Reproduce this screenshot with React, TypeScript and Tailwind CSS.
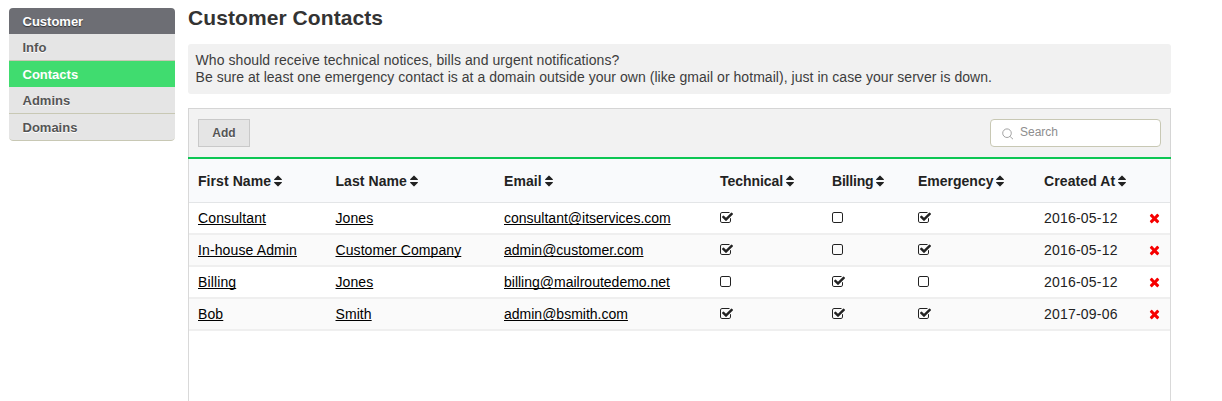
import React from "react";

const GLYPHS = {
  checked:
    "M1408 606v-318q0 -119 -84.5 -203.5t-203.5 -84.5h-832q-119 0 -203.5 84.5t-84.5 203.5v832q0 119 84.5 203.5t203.5 84.5h832q63 0 117 -25q15 -7 18 -23q3 -17 -9 -29l-49 -49q-10 -10 -23 -10q-3 0 -9 2q-23 6 -45 6h-832q-66 0 -113 -47t-47 -113v-832q0 -66 47 -113t113 -47h832q66 0 113 47t47 113v254q0 13 9 22l64 64q10 10 23 10q6 0 12 -3q20 -8 20 -29zM1639 1095l-814 -814q-24 -24 -57 -24t-57 24l-430 430q-24 24 -24 57t24 57l110 110q24 24 57 24t57 -24l263 -263l647 647q24 24 57 24t57 -24l110 -110q24 -24 24 -57t-24 -57z",
  empty:
    "M1120 1280h-832q-66 0 -113 -47t-47 -113v-832q0 -66 47 -113t113 -47h832q66 0 113 47t47 113v832q0 66 -47 113t-113 47zM1408 1120v-832q0 -119 -84.5 -203.5t-203.5 -84.5h-832q-119 0 -203.5 84.5t-84.5 203.5v832q0 119 84.5 203.5t203.5 84.5h832q119 0 203.5 -84.5t84.5 -203.5z",
  times:
    "M1298 214q0 -40 -28 -68l-136 -136q-28 -28 -68 -28t-68 28l-294 294l-294 -294q-28 -28 -68 -28t-68 28l-136 136q-28 28 -28 68t28 68l294 294l-294 294q-28 28 -28 68t28 68l136 136q28 28 68 28t68 -28l294 -294l294 294q28 28 68 28t68 -28l136 -136q28 -28 28 -68t-28 -68l-294 -294l294 -294q28 -28 28 -68z",
  sort:
    "M1024 448q0 -26 -19 -45l-448 -448q-19 -19 -45 -19t-45 19l-448 448q-19 19 -19 45t19 45t45 19h896q26 0 45 -19t19 -45zM1024 832q0 -26 -19 -45t-45 -19h-896q-26 0 -45 19t-19 45t19 45l448 448q19 19 45 19t45 -19l448 -448q19 -19 19 -45z",
};

function Glyph({ name, className }: { name: keyof typeof GLYPHS; className: string }) {
  return (
    <svg viewBox="0 0 1792 1792" className={`h-3.5 w-3.5 shrink-0 ${className}`} fill="currentColor" aria-hidden="true">
      <path transform="translate(0 1536) scale(1 -1)" d={GLYPHS[name]} />
    </svg>
  );
}

const GRID = "grid grid-cols-[137.5px_168.5px_216px_112px_86px_126px_105px_31px]";

const COLUMNS = [
  { label: "First Name", style: "tracking-[0.07px]" },
  { label: "Last Name", style: "tracking-[0.07px]" },
  { label: "Email", style: "tracking-[0.05px]" },
  { label: "Technical", style: "tracking-[-0.05px]" },
  { label: "Billing", style: "tracking-[-0.2px]" },
  { label: "Emergency", style: "tracking-[0px]" },
  { label: "Created At", style: "tracking-[0.1px]" },
];

const CONTACTS = [
  { first: "Consultant", last: "Jones", email: "consultant@itservices.com", flags: [true, false, true], created: "2016-05-12" },
  { first: "In-house Admin", last: "Customer Company", email: "admin@customer.com", flags: [true, false, true], created: "2016-05-12" },
  { first: "Billing", last: "Jones", email: "billing@mailroutedemo.net", flags: [false, true, false], created: "2016-05-12" },
  { first: "Bob", last: "Smith", email: "admin@bsmith.com", flags: [true, true, true], created: "2017-09-06" },
];

function Sidebar() {
  const shadow = "[text-shadow:0_1px_0_#ffffff]";
  return (
    <nav className="mt-2 flex w-[166px] shrink-0 flex-col self-start overflow-hidden rounded-[4px] text-[13px] font-bold leading-[27px] text-[#555555]">
      <div className="h-[26px] bg-[#6d6e74] pl-[13.5px] text-white [text-shadow:0_1px_1px_#333333]">Customer</div>
      <a className={`h-[27px] border-b border-[#c8c8b4] bg-[#e5e5e5] pl-[13.5px] ${shadow}`}>Info</a>
      <a className="h-[26px] bg-[#40dc6f] pl-[13.5px] text-white">Contacts</a>
      <a className={`h-[27px] border-b border-[#c8c8b4] bg-[#e5e5e5] pl-[13.5px] ${shadow}`}>Admins</a>
      <a className={`h-[27px] rounded-b-[4px] border-b border-[#c8c8b4] bg-[#e5e5e5] pl-[13.5px] ${shadow}`}>Domains</a>
    </nav>
  );
}

function Link({ children, className }: { children: string; className: string }) {
  return (
    <a className={`text-black underline decoration-1 underline-offset-1 [text-decoration-skip-ink:none] ${className}`}>{children}</a>
  );
}

export default function App() {
  return (
    <div className="flex h-[401px] w-[1222px] overflow-hidden bg-white pl-[9px] font-['Liberation_Sans',Arial,sans-serif] text-[14px] text-[#222222]">
      <Sidebar />
      <main className="ml-[13px] flex w-[983px] flex-col">
        <h1 className="h-11 pt-[5px] text-[21px] font-bold leading-[26px] tracking-[0.08px] text-[#333333]">Customer Contacts</h1>
        <p className="h-[50px] whitespace-nowrap rounded-[3px] bg-[#f1f1f1] pl-[7.5px] pt-2 leading-[17px] text-[#3d3d3d]">
          <span className="tracking-[0.075px]">Who should receive technical notices, bills and urgent notifications?</span>
          <br />
          <span className="tracking-[0.04px]">
            Be sure at least one emergency contact is at a domain outside your own (like gmail or hotmail), just in case your server is down.
          </span>
        </p>
        <section className="mt-3.5 flex flex-1 flex-col">
          <div className="flex h-[51px] shrink-0 flex-col border-b-2 border-[#0dc653]">
            <div className="flex flex-1 items-start justify-between border-x border-t border-[#d5d5d5] bg-[#f2f2f2] px-[9px] pt-2.5">
              <button className="h-7 w-[52px] border border-[#c9c9c9] bg-[#e5e5e5] text-[12px] font-bold text-[#555555] [text-shadow:0_1px_0_#ffffff]">
                Add
              </button>
              <label className="flex h-7 w-[171px] items-start rounded-[4px] border border-[#c8c8b4] bg-white pl-[11px]">
                <svg viewBox="0 0 12 12" className="mt-2 h-3 w-3" fill="none" stroke="#999999" strokeWidth="0.9">
                  <circle cx="5" cy="5.2" r="4.3" />
                  <path d="M8.1 8.5 11 11.2" />
                </svg>
                <span className="ml-[6px] mt-[4px] text-[12px] leading-4 text-[#8e8e8e]">Search</span>
              </label>
            </div>
          </div>
          <div className="flex flex-1 flex-col border-x border-[#d9d9d9]">
            <div className={`${GRID} h-11 border-b border-[#e3e5e7] bg-[#f9fafc] pl-[9px] font-bold`}>
              {COLUMNS.map((c) => (
                <div key={c.label} className="flex items-start whitespace-nowrap pt-[14px] leading-4">
                  <span className={c.style}>{c.label}</span>
                  <Glyph name="sort" className="ml-[3px] mt-px" />
                </div>
              ))}
            </div>
            <div>
              {CONTACTS.map((c) => (
                <div key={c.email} className={`${GRID} h-8 whitespace-nowrap border-b-2 border-[#efefef] pl-[9px] leading-[30px] odd:bg-white even:bg-[#fafafa]`}>
                  <div><Link className="tracking-[0.12px]">{c.first}</Link></div>
                  <div><Link className="tracking-[0.08px]">{c.last}</Link></div>
                  <div><Link className="tracking-[0px]">{c.email}</Link></div>
                  {c.flags.map((on, i) => (
                    <Glyph key={i} name={on ? "checked" : "empty"} className="mt-2" />
                  ))}
                  <div className="tracking-[0.2px]">{c.created}</div>
                  <Glyph name="times" className="mt-2 text-[#f60000]" />
                </div>
              ))}
            </div>
          </div>
        </section>
      </main>
    </div>
  );
}
